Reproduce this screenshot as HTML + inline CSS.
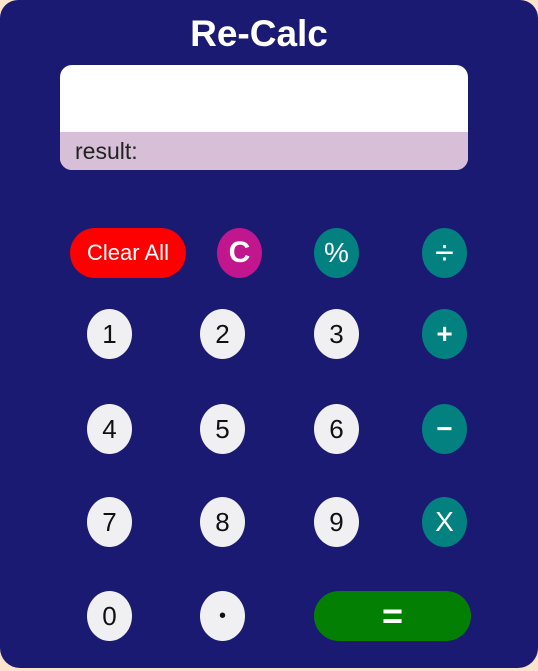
<!DOCTYPE html><html><head><style>
body{margin:0;width:538px;height:671px;background:#fce3cc;font-family:"Liberation Sans",sans-serif;overflow:hidden}
.c{position:absolute;left:0;top:0;width:538px;height:668px;background:#1b1a72;border-radius:18px 18px 20px 20px}
h1{position:absolute;left:0;width:518px;top:13px;margin:0;text-align:center;color:#fff;font-size:37px;font-weight:bold}
.d{position:absolute;left:60px;top:65px;width:408px;height:105px;border-radius:12px;overflow:hidden;background:#fff}
.r{position:absolute;left:0;top:67px;width:408px;height:38px;background:#d6bfd7;color:#222;font-size:23px;line-height:38px;padding-left:15px;box-sizing:border-box}
.b{position:absolute;width:45px;height:50px;border-radius:50%;background:#f0f0f2;color:#111;font-size:26px;display:flex;align-items:center;justify-content:center}
.o{background:#038080;color:#fff;font-size:28px}
</style></head><body><div class="c"></div>
<h1>Re-Calc</h1>
<div class="d"><div class="r">result:</div></div>
<div class="b" style="left:70px;top:228px;width:116px;border-radius:25px;background:#fe0000;color:#fff;font-size:22px">Clear All</div>
<div class="b" style="left:217px;top:228px;background:#c2168f;color:#fff;font-size:30px;font-weight:bold">C</div>
<div class="b o" style="left:314px;top:228px">%</div>
<div class="b o" style="left:422px;top:228px;font-size:34px">÷</div>
<div class="b" style="left:87px;top:309px">1</div><div class="b" style="left:200px;top:309px">2</div><div class="b" style="left:314px;top:309px">3</div><div class="b o" style="left:422px;top:309px;font-weight:bold">+</div>
<div class="b" style="left:87px;top:404px">4</div><div class="b" style="left:200px;top:404px">5</div><div class="b" style="left:314px;top:404px">6</div><div class="b o" style="left:422px;top:404px;font-weight:bold">−</div>
<div class="b" style="left:87px;top:497px">7</div><div class="b" style="left:200px;top:497px">8</div><div class="b" style="left:314px;top:497px">9</div><div class="b o" style="left:422px;top:497px">X</div>
<div class="b" style="left:87px;top:591px">0</div><div class="b" style="left:200px;top:591px;font-size:20px">•</div>
<div class="b" style="left:314px;top:591px;width:157px;border-radius:25px;background:#038003;color:#fff;font-size:36px;font-weight:bold">=</div>
</body></html>
